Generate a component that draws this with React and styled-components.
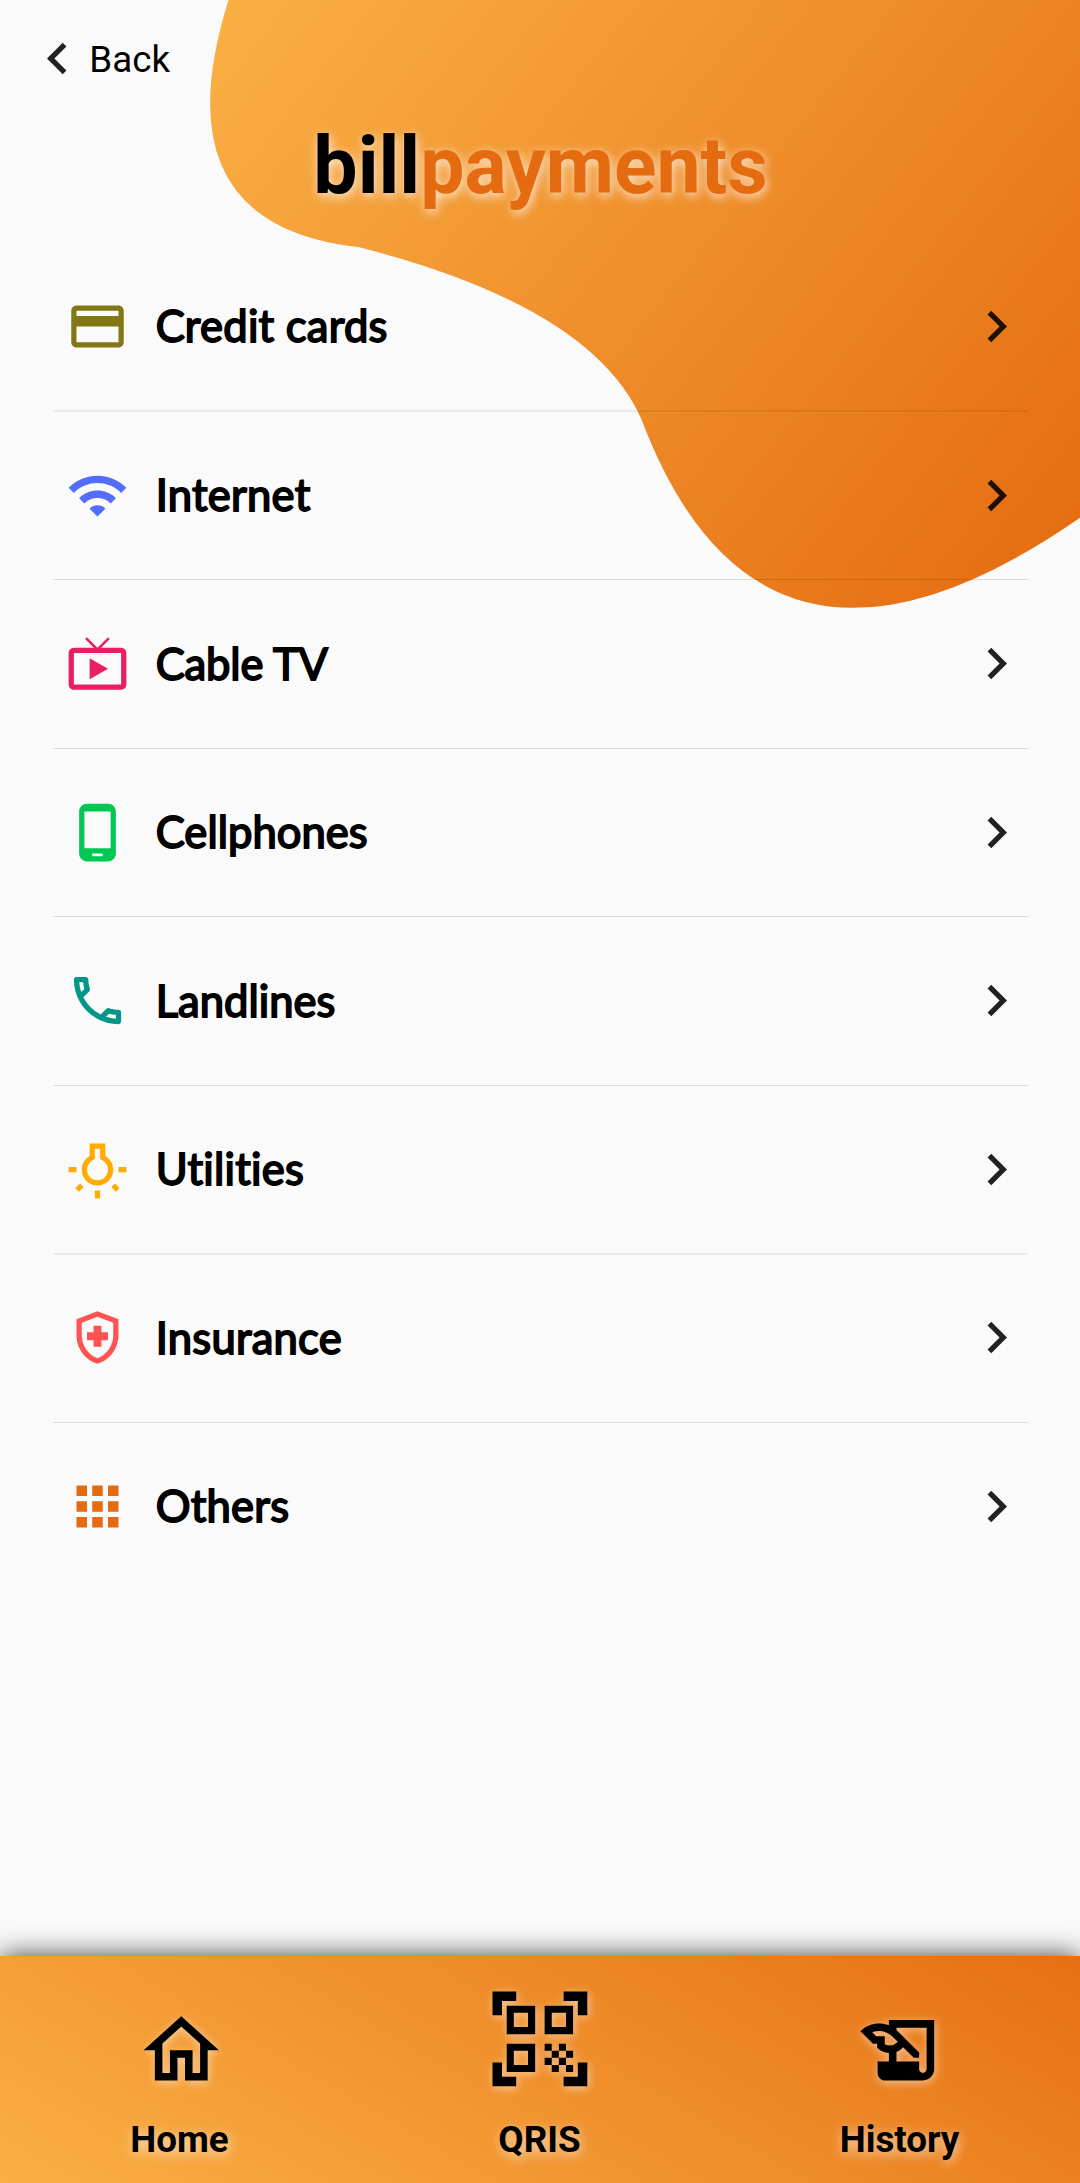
import React from "react";
import styled, { createGlobalStyle } from "styled-components";
import {
  MdApps,
  MdChevronLeft,
  MdChevronRight,
  MdHistoryEdu,
  MdLiveTv,
  MdOutlineCall,
  MdOutlineCreditCard,
  MdOutlineHealthAndSafety,
  MdOutlineHome,
  MdOutlinePhoneAndroid,
  MdOutlineWbIncandescent,
  MdQrCodeScanner,
  MdWifi,
} from "react-icons/md";

const GlobalStyle = createGlobalStyle`
  *, *::before, *::after { box-sizing: border-box; }
  body { margin: 0; background: #fafafa; }
`;

const Page = styled.div`
  position: relative;
  display: flex;
  flex-direction: column;
  width: 1080px;
  height: 2183px;
  overflow: hidden;
  background: #fafafa;
  font-family: Roboto, "Liberation Sans", sans-serif;
  color: #000;
`;

const Backdrop = styled.svg`
  position: absolute;
  top: 0;
  left: 0;
  display: block;
`;

const Content = styled.main`
  position: relative;
  display: flex;
  flex-direction: column;
  flex: 1;
`;

const BackButton = styled.button`
  display: flex;
  align-items: center;
  align-self: flex-start;
  height: 63px;
  margin: 27px 0 0 26.3px;
  padding: 0;
  border: 0;
  background: none;
  color: #000;
  font: 400 36.75px/43px Roboto, "Liberation Sans", sans-serif;

  svg {
    width: 63px;
    height: 63px;
    fill: rgba(0, 0, 0, 0.87);
  }
`;

const BackText = styled.span`
  padding-top: 2px;
`;

const Title = styled.h1`
  margin: 30px 0 0;
  padding-left: 1px;
  text-align: center;
  font-size: 78.75px;
  font-weight: 700;
  line-height: 92px;
  text-shadow: 1.3px 2.6px 11px rgba(255, 255, 255, 0.8);
`;

const Accent = styled.span`
  color: #e46b10;
`;

const List = styled.ul`
  display: flex;
  flex-direction: column;
  margin: 31.2px 52px 0 53px;
  padding: 0;
  list-style: none;
`;

const Row = styled.li`
  display: flex;
  align-items: center;
  height: 168.57px;
  padding: 0 0 2px 13.2px;
  background: ${({ $rule }) =>
    $rule === "soft"
      ? "linear-gradient(rgba(0,0,0,0.065), rgba(0,0,0,0.065)) bottom / 100% 2px no-repeat"
      : $rule === "crisp"
        ? "linear-gradient(rgba(0,0,0,0.12), rgba(0,0,0,0.12)) bottom / 100% 1px no-repeat"
        : "none"};
`;

const RowIcon = styled.span`
  display: flex;
  color: ${({ $color }) => $color};

  svg {
    width: 63px;
    height: 63px;
  }
`;

const RowLabel = styled.span`
  flex: 1;
  margin-left: 26.5px;
  padding-bottom: 2px;
  font-family: Lato, "Liberation Sans", sans-serif;
  font-size: 43.5px;
  line-height: 54px;
  font-variant-ligatures: none;
  letter-spacing: ${({ $tracking }) => $tracking ?? 0.25}px;
  -webkit-text-stroke: 1.8px #000;
`;

const RowChevron = styled(MdChevronRight)`
  width: 63px;
  height: 63px;
  fill: rgba(0, 0, 0, 0.87);
`;

const NavBar = styled.nav`
  position: relative;
  display: flex;
  height: 227px;
  padding-bottom: 22px;
  background: linear-gradient(30deg, #fbb448 -7%, #e46b10 108%);
  box-shadow: 0 0 26px 0 rgba(0, 0, 0, 0.76);
`;

const NavItem = styled.a`
  display: flex;
  flex: 1;
  flex-direction: column;
  align-items: center;
  justify-content: flex-end;
  gap: 22.5px;

  svg {
    width: ${({ $size }) => $size}px;
    height: ${({ $size }) => $size}px;
    margin-left: ${({ $nudge }) => $nudge}px;
    filter: drop-shadow(1.3px 2.6px 5px rgba(255, 255, 255, 0.55));
  }
`;

const NavLabel = styled.span`
  margin-right: 1px;
  font-size: 36.75px;
  font-weight: 700;
  line-height: 43px;
  text-shadow: 1.3px 3px 12px rgba(255, 255, 255, 0.7);
`;

const bills = [
  { label: "Credit cards", icon: MdOutlineCreditCard, color: "#827717", rule: "soft" },
  { label: "Internet", icon: MdWifi, color: "#536dfe", rule: "crisp" },
  { label: "Cable TV", icon: MdLiveTv, color: "#e91e63", rule: "crisp", tracking: -0.15 },
  { label: "Cellphones", icon: MdOutlinePhoneAndroid, color: "#00c853", rule: "crisp", tracking: 0.05 },
  { label: "Landlines", icon: MdOutlineCall, color: "#009688", rule: "crisp", tracking: 0.05 },
  { label: "Utilities", icon: MdOutlineWbIncandescent, color: "#ffab00", rule: "soft" },
  { label: "Insurance", icon: MdOutlineHealthAndSafety, color: "#ff5252", rule: "crisp" },
  { label: "Others", icon: MdApps, color: "#e46b10", rule: "none" },
];

const tabs = [
  { label: "Home", icon: MdOutlineHome, size: 90.5, nudge: 1.6 },
  { label: "QRIS", icon: MdQrCodeScanner, size: 113.8, nudge: 0.4 },
  { label: "History", icon: MdHistoryEdu, size: 90.5, nudge: 1.4 },
];

function Blob() {
  return (
    <Backdrop width="1080" height="640" viewBox="0 0 1080 640" aria-hidden="true">
      <defs>
        <linearGradient id="blob" gradientUnits="userSpaceOnUse" x1="84" y1="67" x2="947" y2="756">
          <stop offset="0" stopColor="#fbb448" />
          <stop offset="1" stopColor="#e46b10" />
        </linearGradient>
      </defs>
      <path
        fill="url(#blob)"
        d="M228.5 0Q157.7 225 359.3 247.3Q593 307 641.7 420Q762.6 738 1080 517.7V0Z"
      />
    </Backdrop>
  );
}

export default function App() {
  return (
    <Page>
      <GlobalStyle />
      <Blob />
      <Content>
        <BackButton>
          <MdChevronLeft />
          <BackText>Back</BackText>
        </BackButton>
        <Title>
          bill<Accent>payments</Accent>
        </Title>
        <List>
          {bills.map(({ label, icon: Icon, color, rule, tracking }) => (
            <Row key={label} $rule={rule}>
              <RowIcon $color={color}>
                <Icon />
              </RowIcon>
              <RowLabel $tracking={tracking}>{label}</RowLabel>
              <RowChevron />
            </Row>
          ))}
        </List>
      </Content>
      <NavBar>
        {tabs.map(({ label, icon: Icon, size, nudge }) => (
          <NavItem key={label} $size={size} $nudge={nudge}>
            <Icon />
            <NavLabel>{label}</NavLabel>
          </NavItem>
        ))}
      </NavBar>
    </Page>
  );
}
